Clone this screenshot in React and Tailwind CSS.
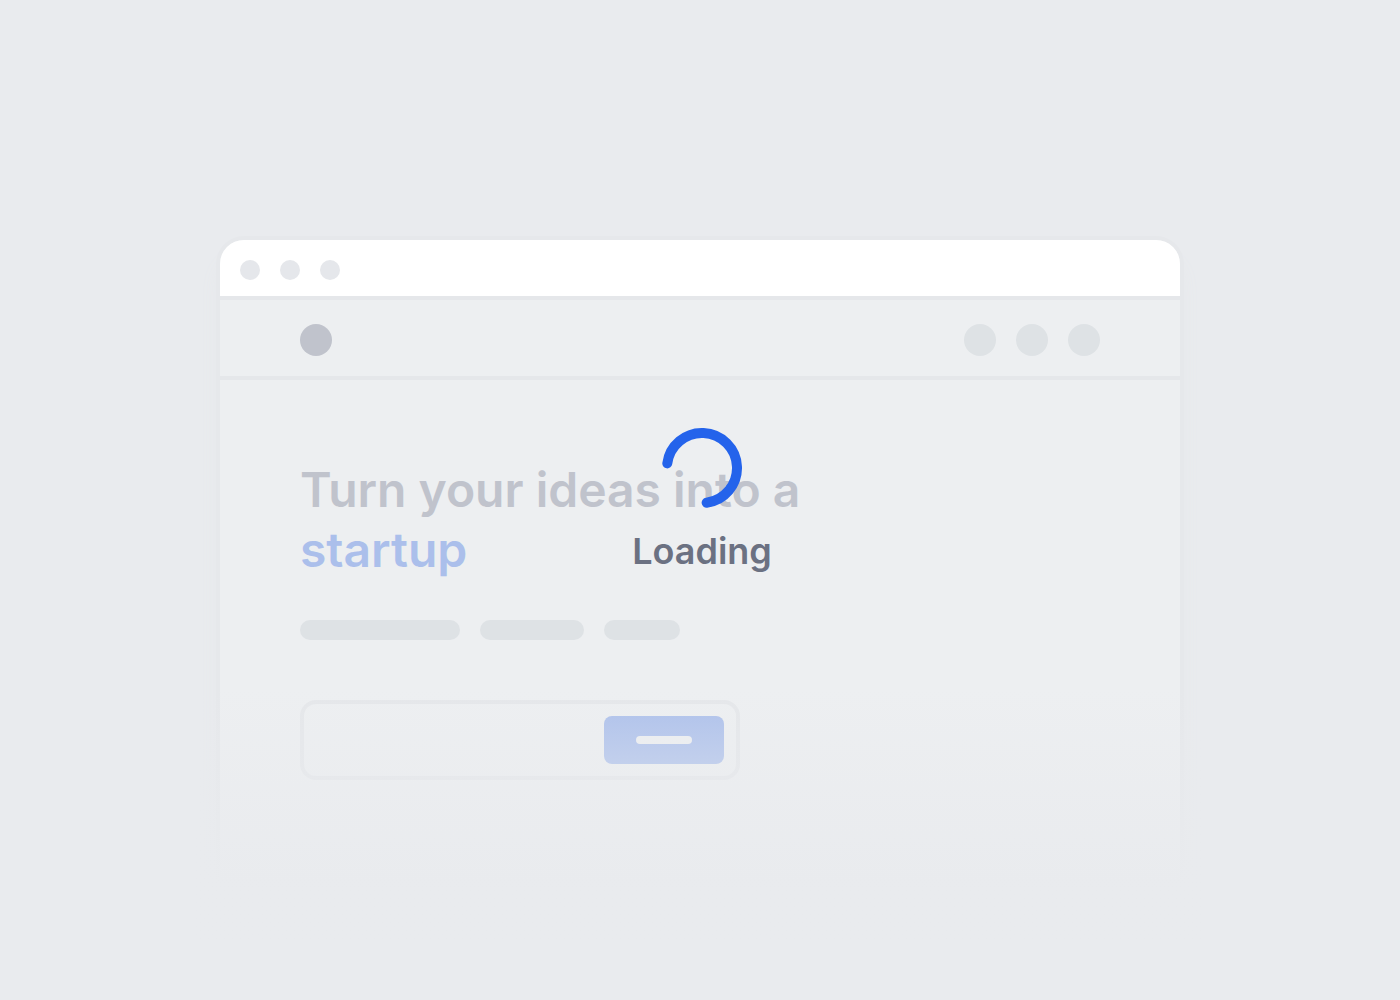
const metaWidths = ['w-40', 'w-[104px]', 'w-[76px]']

const TitleBar = () => (
  <div className="flex h-[60px] items-center gap-5 rounded-t-3xl border-b-4 border-[#e5e7ea] bg-white px-5 pt-1">
    {[0, 1, 2].map((dot) => (
      <span key={dot} className="size-5 rounded-full bg-[#e5e7eb]" />
    ))}
  </div>
)

const SiteNav = () => (
  <div className="flex h-20 items-center justify-between border-b-4 border-[#e5e7ea] px-20 pt-1">
    <span className="size-8 rounded-full bg-[#c0c3cc]" />
    <div className="flex gap-5">
      {[0, 1, 2].map((item) => (
        <span key={item} className="size-8 rounded-full bg-[#dee2e5]" />
      ))}
    </div>
  </div>
)

const Hero = () => (
  <div className="px-20 pt-20 pb-25">
    <h1 className="text-5xl leading-[60px] font-semibold text-[#c0c3cc]">
      Turn your ideas into a
      <br />
      <span className="text-[#abbfeb]">startup</span>
    </h1>

    <div className="mt-10 flex gap-5">
      {metaWidths.map((width) => (
        <span key={width} className={`h-5 rounded-full bg-[#dee2e5] ${width}`} />
      ))}
    </div>

    {/* Signup field */}
    <form
      className="mt-15 flex h-20 w-full max-w-[440px] items-center rounded-2xl border-4 border-[#e5e7ea] pr-3"
      onSubmit={(e) => e.preventDefault()}
    >
      <input type="text" aria-label="Email" className="h-full min-w-0 flex-1 px-4 text-xl outline-none" />
      <button
        type="submit"
        aria-label="Submit"
        className="flex h-12 w-30 items-center justify-center rounded-lg bg-[#abbfeb]"
      >
        <span className="h-2 w-14 rounded-full bg-[#edeff1]" />
      </button>
    </form>
  </div>
)

const Loader = () => (
  <div role="status" className="absolute inset-x-0 top-47 flex flex-col items-center pl-1">
    <svg className="size-20" viewBox="0 0 80 80" fill="none" aria-hidden="true">
      <path
        d="M5.3 35.4A35 35 0 1 1 44.6 74.7"
        stroke="#2463eb"
        strokeWidth="10"
        strokeLinecap="round"
      />
    </svg>
    <p className="mt-5 text-4xl leading-[46px] font-semibold text-[#6b7182]">Loading</p>
  </div>
)

const App = () => {
  return (
    <main className="min-h-screen bg-[#e9ebee] px-6 pt-60 pb-30 font-['Inter',sans-serif]">
      <div className="relative mx-auto max-w-[960px]">
        <div className="rounded-t-3xl bg-[#edeff1] shadow-[0_0_0_4px_#e6e8eb,0_20px_20px_#e6e8eb]">
          <TitleBar />
          <SiteNav />
          <Hero />
        </div>

        {/* Fades the window out toward the bottom */}
        <div className="pointer-events-none absolute -inset-x-6 top-112 -bottom-15 bg-linear-to-b from-[#e9ebee]/0 to-[#e9ebee] to-[200px]" />

        <Loader />
      </div>
    </main>
  )
}

export default App
